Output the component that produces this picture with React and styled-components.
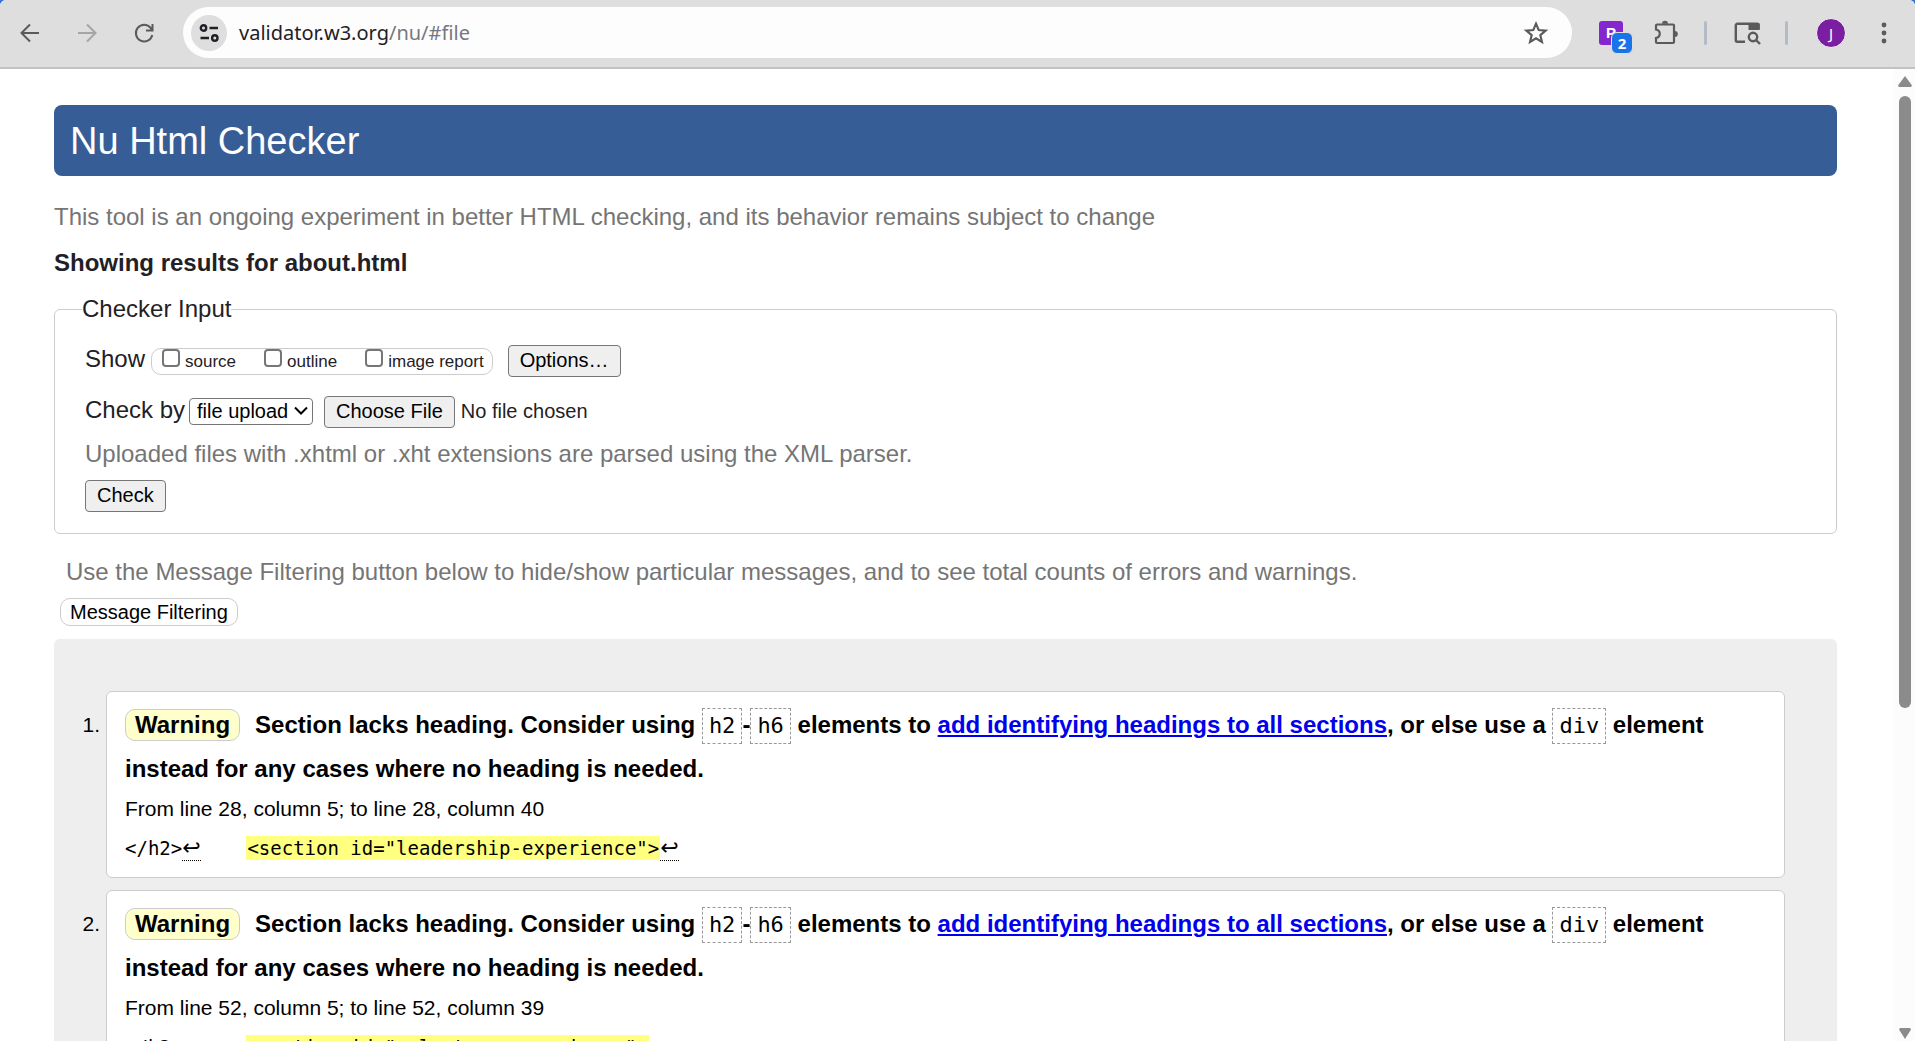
import React from "react";
import styled, { createGlobalStyle } from "styled-components";

const GlobalStyle = createGlobalStyle`
  *, *::before, *::after { box-sizing: border-box; }
  html, body, #root { height: 100%; }
  body {
    margin: 0;
    overflow: hidden;
    background: #3b6fd0;
    font-family: "Liberation Sans", Arial, sans-serif;
    color: #1f2126;
  }
  button, select, input { font-family: inherit; }
`;

const Browser = styled.div`
  display: flex;
  flex-direction: column;
  height: 100vh;
  overflow: hidden;
  border-radius: 6px 6px 0 0;
  background: #fff;
`;

const Toolbar = styled.header`
  display: flex;
  align-items: center;
  flex: none;
  height: 69px;
  padding: 0 17px 2px 11px;
  background: #dedede;
  border-bottom: 2px solid #c2c2c2;
`;

const IconButton = styled.button`
  display: flex;
  align-items: center;
  justify-content: center;
  flex: none;
  width: ${(p) => p.$size || 38}px;
  height: 38px;
  margin-right: ${(p) => p.$gap || 0}px;
  padding: 0;
  border: 0;
  background: none;
  color: ${(p) => p.$color || "#5a5a5a"};
`;

const Omnibox = styled.div`
  display: flex;
  align-items: center;
  flex: 1;
  height: 51px;
  margin-right: 20px;
  padding: 0 17px 0 8px;
  border-radius: 26px;
  background: #fdfdfd;
`;

const SiteInfo = styled.button`
  display: flex;
  align-items: center;
  justify-content: center;
  width: 36px;
  height: 36px;
  padding: 0;
  border: 0;
  border-radius: 50%;
  background: #dedede;
  color: #1f2126;
`;

const Address = styled.div`
  flex: 1;
  padding-left: 12px;
  font: 20px/30px "Noto Sans", "Open Sans", sans-serif;
  color: #1f2126;
`;

const AddressPath = styled.span`
  color: #75787c;
`;

const Separator = styled.span`
  width: 3px;
  height: 24px;
  margin-right: ${(p) => p.$gap}px;
  border-radius: 2px;
  background: #b3bcc6;
`;

const Extension = styled.button`
  position: relative;
  width: 24px;
  height: 24px;
  margin: 0 24px 0 7px;
  padding: 0;
  border: 0;
  border-radius: 3px;
  background: #8527cf;
  color: #fff;
  font: 700 15px/20px "Liberation Sans", Arial, sans-serif;
`;

const Badge = styled.span`
  position: absolute;
  left: 12px;
  top: 11px;
  width: 22px;
  height: 22px;
  border: 1px solid #dedede;
  border-radius: 6px;
  background: #1a73e8;
  font: 700 15px/20px "Noto Sans", sans-serif;
`;

const Avatar = styled.button`
  width: 30px;
  height: 30px;
  margin-right: 24px;
  padding: 0;
  border: 1px solid #f4f4f4;
  border-radius: 50%;
  background: #7b1fa2;
  color: #fff;
  font: 15px/28px "Noto Sans", sans-serif;
`;

const Viewport = styled.div`
  display: flex;
  flex: 1;
  min-height: 0;
`;

const Page = styled.main`
  flex: 1;
  min-width: 0;
  padding: 36px 57px 0 54px;
  overflow: hidden;
`;

const ScrollTrack = styled.div`
  display: flex;
  flex-direction: column;
  align-items: center;
  flex: none;
  width: 21px;
  padding: 7px 0 2px;
  background: #fcfcfc;
`;

const ScrollThumb = styled.div`
  width: 12px;
  height: 63.5%;
  margin: 9px 0 auto;
  border-radius: 6px;
  background: #8b8b8b;
`;

const Banner = styled.h1`
  margin: 0 0 21px;
  padding: 14px 16px 12px;
  border-radius: 8px;
  background: #365d95;
  color: #fff;
  font-size: 38px;
  font-weight: 400;
  line-height: 45px;
`;

const Note = styled.p`
  margin: 0;
  padding-left: ${(p) => p.$indent || 0}px;
  color: #757575;
  font-size: 24px;
  line-height: 40px;
`;

const ResultsTitle = styled.h2`
  margin: 6px 0 12px;
  font-size: 24px;
  line-height: 40px;
`;

const Fieldset = styled.fieldset`
  margin: 0 0 18px;
  padding: 22px 30px 21px;
  border: 1px solid #ccc;
  border-radius: 6px;
`;

const Legend = styled.legend`
  margin-left: -3px;
  padding: 0;
  font-size: 24px;
  line-height: 28px;
`;

const Row = styled.div`
  display: flex;
  align-items: baseline;
  margin-bottom: ${(p) => p.$gap}px;
  font-size: 24px;
  line-height: 28px;
`;

const ShowGroup = styled.div`
  display: flex;
  align-items: center;
  align-self: center;
  gap: 28px;
  height: 27px;
  margin: 0 15px 0 6px;
  padding: 0 8px 0 10px;
  border: 1px solid #ccc;
  border-radius: 10px;
`;

const CheckLabel = styled.label`
  display: flex;
  align-items: center;
  gap: 5px;
  padding-top: 2px;
  font-size: 17px;
  line-height: 24px;
`;

const CheckBox = styled.input`
  appearance: none;
  width: 18px;
  height: 18px;
  margin: 0 0 8px;
  border: 2px solid #767676;
  border-radius: 4px;
  background: #fff;
`;

const Button = styled.button`
  height: 32px;
  margin-top: ${(p) => p.$top || 0}px;
  padding: 0 11px 2px;
  border: 1px solid #767676;
  border-radius: 4px;
  background: #efefef;
  color: #000;
  font-size: 20px;
  line-height: 28px;
`;

const SelectWrap = styled.span`
  position: relative;
  display: inline-flex;
  margin: 0 11px 0 4px;
`;

const Select = styled.select`
  appearance: none;
  width: 124px;
  height: 27px;
  padding: 0 0 0 7px;
  border: 1px solid #767676;
  border-radius: 4px;
  background: #fff;
  color: #000;
  font-size: 20px;
  line-height: 24px;
`;

const Chevron = styled.svg`
  position: absolute;
  right: 5px;
  top: 8px;
  pointer-events: none;
`;

const FileInput = styled.input`
  font-size: 20px;
  line-height: 28px;
  color: #1f2126;

  &::file-selector-button {
    height: 32px;
    margin-right: 6px;
    padding: 0 11px 2px;
    border: 1px solid #767676;
    border-radius: 4px;
    background: #efefef;
    color: #000;
    font: inherit;
  }
`;

const FilterButton = styled.button`
  display: block;
  height: 28px;
  margin: 6px 0 13px 6px;
  padding: 0 9px 1px;
  border: 1px solid #ccc;
  border-radius: 10px;
  background: #fff;
  color: #000;
  font-size: 20px;
  line-height: 24px;
`;

const Results = styled.ol`
  display: flex;
  flex-direction: column;
  gap: 12px;
  margin: 0;
  padding: 52px;
  border-radius: 6px;
  background: #eee;
  color: #000;
  font-size: 21px;
`;

const Card = styled.li`
  display: flex;
  flex: none;

  &::before {
    content: "${(p) => p.$number}.";
    width: 48px;
    margin-left: -48px;
    padding: 20px 6px 0 0;
    line-height: 28px;
    text-align: right;
  }
`;

const CardBody = styled.div`
  flex: 1;
  padding: 11px 18px 13px;
  border: 1px solid #ccc;
  border-radius: 6px;
  background: #fff;
`;

const Message = styled.p`
  margin: 0;
  font-size: 24px;
  font-weight: 700;
  line-height: 44px;
`;

const Tag = styled.strong`
  display: inline-block;
  margin-right: 15px;
  padding: 1px 9px;
  border: 1px solid #ccc;
  border-radius: 10px;
  background: #ffc;
  line-height: 28px;
`;

const InlineCode = styled.code`
  display: inline-block;
  padding: 4px 6px;
  border: 1px dashed #999;
  font: 400 22px/26px "DejaVu Sans Mono", monospace;
`;

const Link = styled.a`
  color: #00e;
`;

const Location = styled.p`
  margin: 3px 0 0;
  line-height: 30px;
`;

const Extract = styled.pre`
  margin: 8px 0 0;
  font: 19px/32px "DejaVu Sans Mono", monospace;
`;

const Mark = styled.mark`
  padding: 1px;
  background: #ffff80;
  color: #000;
`;

const LineBreak = styled.span`
  border-bottom: 1px dotted #000;
  font: 22px "DejaVu Sans", sans-serif;
`;

const results = [
  { line: 28, end: 40, id: "leadership-experience" },
  { line: 52, end: 39, id: "volunteer-experience" },
];

const Stroke = ({ size = 24, width = 2, children }) => (
  <svg width={size} height={size} viewBox="0 0 24 24" fill="none" stroke="currentColor" strokeWidth={width}>
    {children}
  </svg>
);

function BrowserToolbar() {
  return (
    <Toolbar>
      <IconButton $gap={19} aria-label="Back">
        <Stroke><path d="M21 12H4M12 3.500 3.500 12l8.500 8.500" /></Stroke>
      </IconButton>
      <IconButton $gap={19} $color="#a5a5a5" aria-label="Forward">
        <Stroke><path d="M3 12h17M12 3.500 20.500 12 12 20.500" /></Stroke>
      </IconButton>
      <IconButton $gap={20} aria-label="Reload">
        <Stroke><path d="M20.300 14a8.300 8.300 0 1 1-1.600-7L20.500 9M20.500 3v6.500H14" /></Stroke>
      </IconButton>
      <Omnibox>
        <SiteInfo aria-label="View site information">
          <Stroke width={2.4}>
            <circle cx="6.500" cy="7" r="2.700" />
            <path d="M12.500 7H21M3.500 17H12" />
            <circle cx="17.800" cy="17" r="2.700" />
          </Stroke>
        </SiteInfo>
        <Address>validator.w3.org<AddressPath>/nu/#file</AddressPath></Address>
        <IconButton aria-label="Bookmark this tab">
          <Stroke size={26}><path d="m12 3.400 2.500 5.900 6.400.5-4.900 4.200 1.500 6.200-5.500-3.300-5.500 3.300L8 14 3.100 9.800l6.400-.5z" /></Stroke>
        </IconButton>
      </Omnibox>
      <Extension aria-label="Extension">P<Badge>2</Badge></Extension>
      <IconButton $gap={19} aria-label="Extensions">
        <svg width="26" height="26" viewBox="0 0 26 26" fill="none" stroke="currentColor" strokeWidth="2.200">
          <path d="M4 4.500h16a1 1 0 0 1 1 1V22a1 1 0 0 1-1 1H4a1 1 0 0 1-1-1v-4c5-1 5-7.500 0-8.500v-4a1 1 0 0 1 1-1z" />
          <path d="M9 3.700a3 3 0 0 1 6 0zM21.800 11a3 3 0 0 1 0 6z" fill="currentColor" stroke="none" />
        </svg>
      </IconButton>
      <Separator $gap={21} />
      <IconButton $gap={19} aria-label="Search tabs">
        <svg width="28" height="26" viewBox="0 0 28 26" fill="none" stroke="currentColor" strokeWidth="2.400">
          <path d="M12 21.700H4.300a1.500 1.500 0 0 1-1.500-1.500V5.300a1.500 1.500 0 0 1 1.500-1.500H24a1.500 1.500 0 0 1 1.500 1.500V9" />
          <path d="M15.500 3.500h11.200v6.500H15.500z" fill="currentColor" stroke="none" />
          <circle cx="20" cy="17" r="4.200" />
          <path d="m23 20 4 4" />
        </svg>
      </IconButton>
      <Separator $gap={28} />
      <Avatar aria-label="Profile">J</Avatar>
      <IconButton $size={28} aria-label="Menu">
        <svg width="6" height="24" viewBox="0 0 6 24" fill="currentColor">
          <circle cx="3" cy="4" r="2.400" />
          <circle cx="3" cy="12" r="2.400" />
          <circle cx="3" cy="20" r="2.400" />
        </svg>
      </IconButton>
    </Toolbar>
  );
}

function CheckerForm() {
  return (
    <form onSubmit={(e) => e.preventDefault()}>
      <Fieldset>
        <Legend>Checker Input</Legend>
        <Row $gap={19}>
          Show
          <ShowGroup>
            {["source", "outline", "image report"].map((name) => (
              <CheckLabel key={name}>
                <CheckBox type="checkbox" />
                {name}
              </CheckLabel>
            ))}
          </ShowGroup>
          <Button type="button">Options…</Button>
        </Row>
        <Row $gap={6}>
          <label htmlFor="docselect">Check by</label>
          <SelectWrap>
            <Select id="docselect" defaultValue="file">
              <option value="url">address</option>
              <option value="file">file upload</option>
              <option value="textarea">text input</option>
            </Select>
            <Chevron width="14" height="10" viewBox="0 0 14 10" fill="none" stroke="#000" strokeWidth="2">
              <path d="m1 1.500 6 6 6-6" />
            </Chevron>
          </SelectWrap>
          <FileInput type="file" aria-label="File to check" />
        </Row>
        <Note>Uploaded files with .xhtml or .xht extensions are parsed using the XML parser.</Note>
        <Button type="submit" $top={6}>Check</Button>
      </Fieldset>
    </form>
  );
}

function ResultItem({ number, result }) {
  return (
    <Card $number={number}>
      <CardBody>
        <Message>
          <Tag>Warning</Tag>Section lacks heading. Consider using <InlineCode>h2</InlineCode>-<InlineCode>h6</InlineCode>{" "}
          elements to <Link href="#headings">add identifying headings to all sections</Link>, or else use a{" "}
          <InlineCode>div</InlineCode> element instead for any cases where no heading is needed.
        </Message>
        <Location>
          From line {result.line}, column 5; to line {result.line}, column {result.end}
        </Location>
        <Extract>
          {"</h2>"}<LineBreak>↩</LineBreak>{"    "}
          <Mark>{`<section id="${result.id}">`}</Mark><LineBreak>↩</LineBreak>
        </Extract>
      </CardBody>
    </Card>
  );
}

export default function App() {
  return (
    <>
      <GlobalStyle />
      <Browser>
        <BrowserToolbar />
        <Viewport>
          <Page>
            <Banner>Nu Html Checker</Banner>
            <Note>This tool is an ongoing experiment in better HTML checking, and its behavior remains subject to change</Note>
            <ResultsTitle>Showing results for about.html</ResultsTitle>
            <CheckerForm />
            <Note $indent={12}>
              Use the Message Filtering button below to hide/show particular messages, and to see total counts of errors and warnings.
            </Note>
            <FilterButton type="button">Message Filtering</FilterButton>
            <Results>
              {results.map((result, i) => (
                <ResultItem key={result.id} number={i + 1} result={result} />
              ))}
            </Results>
          </Page>
          <ScrollTrack>
            <svg width="14" height="11" viewBox="0 0 14 11" fill="#8b8b8b"><path d="M7 0 14 9.500 13 11H1L0 9.500z" /></svg>
            <ScrollThumb />
            <svg width="12" height="11" viewBox="0 0 12 11" fill="#8b8b8b"><path d="M6 11 0 1.500 1 0h10l1 1.500z" /></svg>
          </ScrollTrack>
        </Viewport>
      </Browser>
    </>
  );
}
